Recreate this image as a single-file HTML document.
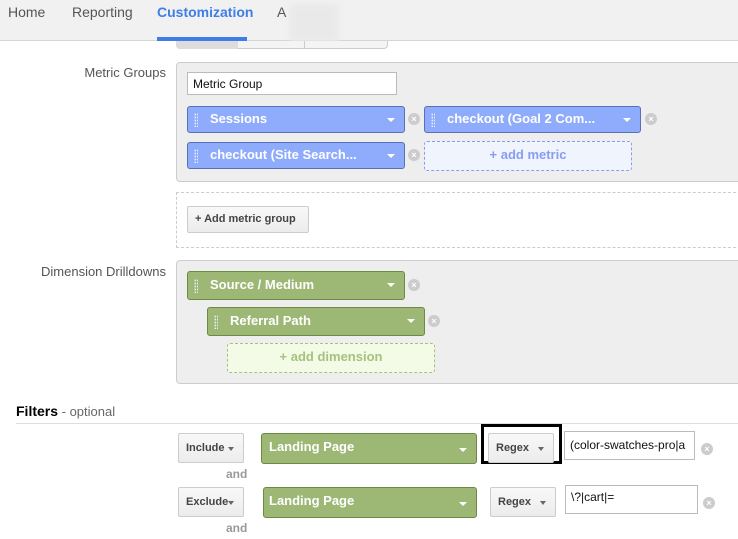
<!DOCTYPE html>
<html><head><style>
*{box-sizing:border-box;margin:0;padding:0}
body{width:738px;height:539px;overflow:hidden;background:#fff;font-family:"Liberation Sans",Arial,sans-serif;position:relative;font-size:13px;color:#333}
.a{position:absolute}
.nav{left:0;top:0;width:738px;height:41px;background:#f1f1f1;border-bottom:1px solid #d6d6d6}
.tab{top:4px;font-size:14px;color:#555}
.panel{background:#eee;border:1px solid #ccc;border-radius:4px}
.chip{height:27px;border-radius:3px;color:#fff;font-weight:bold;font-size:13px;line-height:23px;padding-left:22px}
.blue{background:#8fabfb;border:1px solid #5a6fb8}
.green{background:#9db775;border:1px solid #6b8a45}
.grip{position:absolute;left:6px;top:6px;width:4px;height:14px;background-image:radial-gradient(circle,#e8eefc 0.8px,transparent 1px);background-size:2.5px 3px}
.arr{position:absolute;right:9px;top:11px;border-left:4px solid transparent;border-right:4px solid transparent;border-top:4px solid #fff}
.x{width:12px;height:12px;border-radius:50%;background:#ccc;color:#fff;font-size:9px;line-height:12px;text-align:center;font-weight:bold}
.btn{height:30px;border:1px solid #ccc;border-radius:2px;background:linear-gradient(#f8f8f8,#ececec);font-size:11px;font-weight:bold;color:#444;line-height:28px;padding-left:7px}
.darr{position:absolute;right:9px;top:13px;border-left:3.5px solid transparent;border-right:3.5px solid transparent;border-top:4px solid #666}
.lbl{font-size:13px;color:#555;text-align:right;width:150px}
.and{font-size:12px;font-weight:bold;color:#999}
</style></head><body>
<div class="a nav"></div>
<div class="a tab" style="left:8px">Home</div>
<div class="a tab" style="left:72px">Reporting</div>
<div class="a tab" style="left:157px;color:#3f7de8;font-weight:bold">Customization</div>
<div class="a tab" style="left:277px">A</div>
<div class="a" style="left:290px;top:4px;width:48px;height:38px;background:#e9e9e9;filter:blur(3px)"></div>
<div class="a" style="left:157px;top:37px;width:90px;height:4px;background:#3f7de8"></div>
<div class="a" style="left:176px;top:41px;width:212px;height:8px;border:1px solid #ccc;border-top:none;border-radius:0 0 4px 4px;background:#f4f4f4"></div>
<div class="a" style="left:176px;top:41px;width:62px;height:8px;background:#ddd;border-radius:0 0 0 4px"></div>
<div class="a" style="left:304px;top:41px;width:1px;height:8px;background:#ccc"></div>

<div class="a lbl" style="left:16px;top:65px">Metric Groups</div>
<div class="a panel" style="left:176px;top:62px;width:580px;height:120px"></div>
<div class="a" style="left:187px;top:72px;width:210px;height:23px;background:#fff;border:1px solid #bbb;font-size:12px;color:#111;padding:4px 5px">Metric Group</div>
<div class="a chip blue" style="left:187px;top:106px;width:218px"><i class="grip"></i>Sessions<i class="arr"></i></div>
<div class="a x" style="left:408px;top:113px">×</div>
<div class="a chip blue" style="left:424px;top:106px;width:217px"><i class="grip"></i>checkout (Goal 2 Com...<i class="arr"></i></div>
<div class="a x" style="left:645px;top:113px">×</div>
<div class="a chip blue" style="left:187px;top:142px;width:218px"><i class="grip"></i>checkout (Site Search...<i class="arr"></i></div>
<div class="a x" style="left:408px;top:149px">×</div>
<div class="a" style="left:424px;top:141px;width:208px;height:30px;border:1px dashed #8a9cf0;border-radius:3px;background:#f0f4fd;color:#8a9cf0;font-weight:bold;text-align:center;line-height:26px">+ add metric</div>

<div class="a" style="left:176px;top:192px;width:580px;height:56px;border:1px dashed #ccc;border-right:none"></div>
<div class="a btn" style="left:187px;top:206px;width:122px;height:27px;line-height:25px;font-size:11px">+ Add metric group</div>

<div class="a lbl" style="left:16px;top:264px">Dimension Drilldowns</div>
<div class="a panel" style="left:176px;top:260px;width:580px;height:124px"></div>
<div class="a chip green" style="left:187px;top:271px;width:218px;height:29px;line-height:25px"><i class="grip" style="top:7px"></i>Source / Medium<i class="arr"></i></div>
<div class="a x" style="left:408px;top:279px">×</div>
<div class="a chip green" style="left:207px;top:307px;width:218px;height:29px;line-height:25px"><i class="grip" style="top:7px"></i>Referral Path<i class="arr"></i></div>
<div class="a x" style="left:428px;top:315px">×</div>
<div class="a" style="left:227px;top:343px;width:208px;height:30px;border:1px dashed #a6c27e;border-radius:3px;background:#f3fae6;color:#a6c27e;font-weight:bold;text-align:center;line-height:26px">+ add dimension</div>

<div class="a" style="left:16px;top:403px;font-size:14px;color:#000"><b>Filters</b><span style="color:#666;font-size:13px"> - optional</span></div>
<div class="a" style="left:16px;top:423px;width:722px;height:1px;background:#ddd"></div>

<div class="a btn" style="left:178px;top:433px;width:66px">Include<i class="darr"></i></div>
<div class="a chip green" style="left:261px;top:433px;width:216px;height:31px;padding-left:7px;line-height:26px">Landing Page<i class="arr" style="top:14px"></i></div>
<div class="a" style="left:481px;top:424px;width:81px;height:40px;border:3px solid #000"></div>
<div class="a btn" style="left:488px;top:433px;width:66px">Regex<i class="darr"></i></div>
<div class="a" style="left:564px;top:431px;width:131px;height:29px;border:1px solid #bbb;background:#fff;font-size:12px;color:#111;padding:6px 5px;white-space:nowrap;overflow:hidden">(color-swatches-pro|a</div>
<div class="a x" style="left:701px;top:443px">×</div>
<div class="a and" style="left:226px;top:467px">and</div>

<div class="a btn" style="left:178px;top:487px;width:66px">Exclude<i class="darr"></i></div>
<div class="a chip green" style="left:263px;top:487px;width:214px;height:31px;padding-left:5px;line-height:26px">Landing Page<i class="arr" style="top:14px"></i></div>
<div class="a btn" style="left:490px;top:487px;width:66px">Regex<i class="darr"></i></div>
<div class="a" style="left:565px;top:485px;width:133px;height:29px;border:1px solid #bbb;background:#fff;font-size:12px;color:#111;padding:4px 5px">\?|cart|=</div>
<div class="a x" style="left:703px;top:497px">×</div>
<div class="a and" style="left:226px;top:521px">and</div>
</body></html>
